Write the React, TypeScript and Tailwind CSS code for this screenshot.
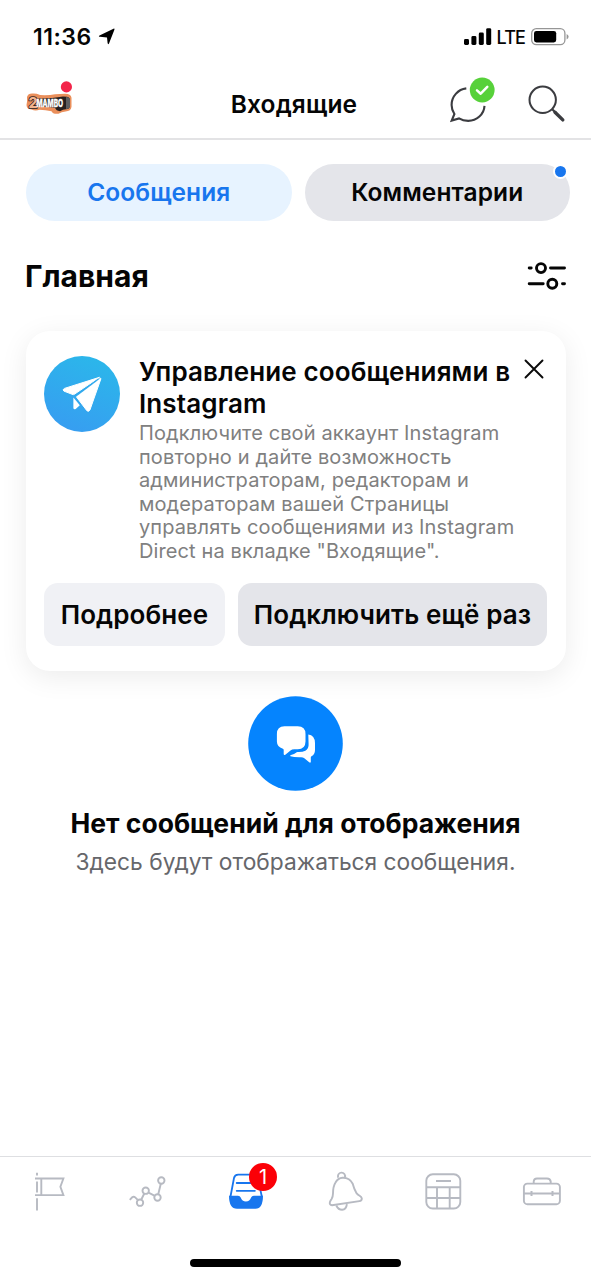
import React from 'react';

type TabItem = {
  id: string;
  label: string;
  icon: React.ReactNode;
  badge?: number;
};

const LocationArrow = () => (
  <svg width="18" height="18" viewBox="0 0 18 18">
    <path d="M16 .6Q16.800.6 16.400 1.800L11 15.500q-1 1.600-1.400-.4L9 9.400 2 8.800q-2-.4-.5-1.400Z" fill="#000" />
  </svg>
);

const Signal = () => (
  <svg width="28" height="18" viewBox="0 0 28 18">
    <rect x="0" y="11" width="5" height="6" rx="1.4" />
    <rect x="7.4" y="8" width="5" height="9" rx="1.4" />
    <rect x="14.8" y="4.5" width="5" height="12.5" rx="1.4" />
    <rect x="22.2" y="0.2" width="5" height="16.8" rx="1.4" />
  </svg>
);

const Battery = () => (
  <svg width="38" height="18" viewBox="0 0 38 18">
    <rect x="0.7" y="0.7" width="33.2" height="16" rx="4.6" fill="none" stroke="#969696" strokeWidth="1.3" />
    <rect x="3" y="2.9" width="22.2" height="11.6" rx="2.4" fill="#000" />
    <path d="M35.6 6v5.600q2-1 2-2.800t-2-2.800Z" fill="#969696" />
  </svg>
);

const PageLogo = () => (
  <svg width="50" height="42" viewBox="24 78 50 42">
    <path
      d="M27 97q1-3.400 5-3.400 4-.4 8 1.400 9 .5 15-.8l10-.4q6 0 6.500 4v9q-.5 4.500-6 4.700-4 .2-7 2.200-6 .5-7-2.500-6-1.500-12-1.500-4 1.500-8-.2-5-.5-5-4.500 1-4 .5-8Z"
      fill="#ea8f5b"
    />
    <path d="M37 98.500q13 .5 26-2l4 .3q3 .5 3 4v5q-.5 3.500-4 3.500-3 0-6 2-4-.5-5-3.500-10-1.500-18-1.500Z" fill="#26201f" />
    <path d="M66 97v12q4 .3 4-3v-6q0-3-4-3Z" fill="#5d5d5f" />
    <text x="28.500" y="107.500" fontSize="14" fontWeight="800" fill="#f2b28c" stroke="#26201f" strokeWidth="1.5" paintOrder="stroke">2</text>
    <text transform="translate(36.500 106.800) scale(.72 1.1)" fontSize="9" fontWeight="800" fill="#fff" stroke="#fff" strokeWidth="0.3">MAMBO</text>
    <circle cx="66.4" cy="86.9" r="5.6" fill="#f3254a" />
  </svg>
);

const ChatDone = () => (
  <svg width="48" height="48" viewBox="448 76 48 48" fill="none">
    <path
      d="M466.300 88.400a16.600 16.600 0 0 0-14.700 16.500c0 3.700 1.100 6.500 2.800 9.100l-2.700 6.600 7.300-2.200c2.700 1.700 5.500 2.500 9.200 2.500 8.600 0 15.800-6.500 16.300-15"
      stroke="#3b3c40"
      strokeWidth="2.1"
    />
    <circle cx="482.2" cy="90" r="12.4" fill="#57d13a" />
    <path d="m477 90.400 3.700 3.300 6.600-6.900" stroke="#fff" strokeWidth="2.5" strokeLinecap="round" strokeLinejoin="round" />
  </svg>
);

const SearchIcon = () => (
  <svg width="40" height="40" viewBox="527 84 40 40" fill="none" stroke="#3b3c40">
    <circle cx="542.7" cy="99.8" r="13.2" strokeWidth="2" />
    <path d="m552.200 109.300 4 4" strokeWidth="2.2" />
    <path d="m555 112.200 7.800 7.700" strokeWidth="3.4" strokeLinecap="round" />
  </svg>
);

const FilterIcon = () => (
  <svg width="40" height="30" viewBox="527 261 40 30" fill="none" stroke="#050505" strokeWidth="2.9" strokeLinecap="round">
    <path d="M529.200 268h2M550.500 268h14M529.200 283.800h14M562.500 283.800h2" />
    <circle cx="541" cy="268.1" r="4.5" />
    <circle cx="552.3" cy="283.8" r="4.5" />
  </svg>
);

const SendIcon = () => (
  <svg width="76" height="76" viewBox="0 0 76 76">
    <defs>
      <linearGradient id="send" x1="0.7" y1="0" x2="0.3" y2="1">
        <stop offset="0" stopColor="#2bb7ea" />
        <stop offset="1" stopColor="#379df1" />
      </linearGradient>
    </defs>
    <circle cx="38" cy="38" r="38" fill="url(#send)" />
    <path d="M55.500 21.300 20.500 32.400q-2.500 1.300-.6 2.700l9.600 3.700Z" fill="#fff" stroke="#fff" strokeWidth="1" strokeLinejoin="round" />
    <path d="M56.600 22.200 32.200 40.600l10.700 14.100q1.900 1.500 3-.7l11-31.200Z" fill="#fff" stroke="#fff" strokeWidth="1" strokeLinejoin="round" />
    <path d="M29.400 41.600v10.600q.6 1.800 2.300.7l4.100-3.700Z" fill="#fff" />
    <path d="M29.500 39.300 31.300 40.500 54.500 22.900" fill="none" stroke="#33a9ed" strokeWidth="1.2" />
  </svg>
);

const CloseIcon = () => (
  <svg width="20" height="20" viewBox="0 0 20 20" stroke="#0a0a0a" strokeWidth="1.9" strokeLinecap="round">
    <path d="m1.500 1.500 17 17M18.500 1.500l-17 17" />
  </svg>
);

const EmptyIcon = () => (
  <svg width="95" height="95" viewBox="248 696 95 95">
    <circle cx="295.5" cy="743.5" r="47.3" fill="#0584fe" />
    <path d="M308.300 734.500q6.500.8 6.700 8.500v7q0 4.500-3.500 6.300-.7.400-.7 1.200v4.500q-.5 1.200-1.600.3l-5.200-4.200q-1-.8-2.800-.8-7 .2-10.800-1-.8-.8.600-1.300 3.500-.8 5-2.300.6-.6 1.600-.6 5 .2 7.800-1.400 3.500-2 3.200-6.700Z" fill="#fff" />
    <path d="M284.500 726.300h13.200q7.800 0 7.800 7.800v7.500q0 7.700-7.800 7.700h-3.400q-2.300 0-3.800 1.200l-5.200 4.200q-1.500.8-1.600-.8v-4q0-.8-.8-1.100-6-2-6-7.200v-7.500q0-7.800 7.600-7.800Z" fill="#fff" />
  </svg>
);

const FlagIcon = () => (
  <svg width="40" height="44" viewBox="29 1170 40 44" fill="none" stroke="#b7bac2" strokeWidth="1.9">
    <path d="M37 1172.700v2.800M37 1181.500v11M37 1198.200v12.200" />
    <path d="M35 1178.500h28.400l-3 8.300 3 8.300H35M41.300 1178.500v16.600" />
  </svg>
);

const ChartIcon = () => (
  <svg width="40" height="44" viewBox="128 1170 40 44" fill="none" stroke="#b7bac2" strokeWidth="1.9">
    <path d="m129.800 1199.800 2.400-2.500q1.500-1.200 3 .1l2.500 2.500M141.300 1199.500l3-6M148.500 1192.600l6.400 3.200M158.300 1194l2.500-10.300" />
    <circle cx="140" cy="1202.7" r="3.2" />
    <circle cx="145.7" cy="1190.7" r="3.2" />
    <circle cx="157.5" cy="1197.5" r="3.2" />
    <circle cx="161.3" cy="1180.5" r="3.2" />
  </svg>
);

const InboxIcon = () => (
  <svg width="40" height="44" viewBox="226 1170 40 44" fill="none">
    <path d="M230.500 1196.500 234 1178q.8-3.400 4.200-3.400h15.400q3.400 0 4.200 3.400l4 18.500" stroke="#1876ee" strokeWidth="1.8" />
    <path d="M236.700 1183h16M236.700 1190.800h18.200" stroke="#1876ee" strokeWidth="1.8" strokeLinecap="round" />
    <path d="M229 1195.700h9q2 0 2.700 1.900 1.400 4 5.200 4t5.200-4q.7-1.900 2.700-1.900h9.200q-.1 13-7.500 13h-18.500q-8 0-8-13Z" fill="#1876ee" />
  </svg>
);

const BellIcon = () => (
  <svg width="40" height="44" viewBox="325 1170 40 44" fill="none" stroke="#b7bac2" strokeWidth="1.9" strokeLinejoin="round">
    <path d="M338.300 1177.800a3.600 3.600 0 1 1 6.600-.4" />
    <path d="M332 1205.200q-2.800-.2-2.100-3.200.6-1.500 1.700-3 1.300-2 1.400-5.500 0-7 2.500-11 2.500-4.500 7-4.700 7-.3 10.200 6 1.300 5 3.600 9 1.300 1.700 3.300 2.900 2 1.300 2.200 2.700 0 2.300-2.400 2.700Z" />
    <path d="M336.300 1205.500q2 4.300 5.800 4.300 4.200-.4 4.800-5.700" />
  </svg>
);

const CalendarIcon = () => (
  <svg width="40" height="44" viewBox="423 1170 40 44" fill="none" stroke="#b7bac2" strokeWidth="1.9">
    <rect x="426.3" y="1174.3" width="34" height="34.2" rx="6.5" />
    <path d="M436 1181h15M426.300 1187.300h34M426.300 1198h34M437 1187.300v21M449.700 1187.300v21" />
  </svg>
);

const ToolboxIcon = () => (
  <svg width="40" height="44" viewBox="522 1170 40 44" fill="none" stroke="#b7bac2" strokeWidth="1.9">
    <rect x="523.9" y="1183.6" width="36" height="20.6" rx="3.5" />
    <path d="M533.700 1183.300v-1.800q.2-3 3.300-3h10q3.300 0 3.700 3v1.800M524 1193.500h36" />
    <path d="M531.500 1191v5M552.500 1191v5" strokeWidth="2" />
  </svg>
);

const tabs: TabItem[] = [
  { id: 'page', label: 'Страница', icon: <FlagIcon /> },
  { id: 'stats', label: 'Статистика', icon: <ChartIcon /> },
  { id: 'inbox', label: 'Входящие', icon: <InboxIcon />, badge: 1 },
  { id: 'alerts', label: 'Уведомления', icon: <BellIcon /> },
  { id: 'planner', label: 'Планировщик', icon: <CalendarIcon /> },
  { id: 'tools', label: 'Инструменты', icon: <ToolboxIcon /> },
];

const StatusBar = () => (
  <div className="h-[74px] shrink-0 flex items-center justify-between pl-[33px] pr-[22px]">
    <div className="flex items-center gap-1.5 text-[23px] font-semibold tracking-[0.5px]">
      <span>11:36</span>
      <LocationArrow />
    </div>
    <div className="flex items-center">
      <Signal />
      <span className="ml-[5px] mr-1.5 text-[18px] font-medium tracking-[-0.9px]">LTE</span>
      <Battery />
    </div>
  </div>
);

const Header = () => (
  <header className="h-[66px] shrink-0 border-b-2 border-[#e3e3e5] grid grid-cols-[180px_1fr_183px] items-center">
    <div className="pl-6 pb-3.5"><PageLogo /></div>
    <h1 className="text-center text-[24.5px] leading-7 font-semibold tracking-[0.15px] -mt-1">Входящие</h1>
    <div className="flex items-center justify-end gap-[31px] pr-6 -mt-1">
      <div className="mb-2"><ChatDone /></div>
      <SearchIcon />
    </div>
  </header>
);

const NoticeCard = () => (
  <section className="ml-[26px] mr-[25px] mt-[35px] h-[340px] rounded-[24px] bg-white shadow-[0_6px_28px_rgba(0,0,0,0.08)] pl-[18px] pr-[19px] pt-[25px]">
    <div className="flex h-[227px]">
      <SendIcon />
      <div className="ml-[19px] w-[378px] whitespace-nowrap">
        <h3 className="text-[26px] leading-[31.5px] font-semibold tracking-[0.13px]">
          Управление сообщениями в<br />Instagram
        </h3>
        <p className="text-[20px] leading-[23.6px] text-[#808080] mt-[3px] tracking-[0.11px]">
          Подключите свой аккаунт Instagram<br />
          повторно и дайте возможность<br />
          администраторам, редакторам и<br />
          модераторам вашей Страницы<br />
          управлять сообщениями из Instagram<br />
          Direct на вкладке "Входящие".
        </p>
      </div>
      <button className="ml-auto mt-[3px] mr-[3px] self-start" aria-label="Закрыть"><CloseIcon /></button>
    </div>
    <div className="flex gap-[13px] text-[26px] font-semibold tracking-[0.1px] whitespace-nowrap">
      <button className="w-[181px] h-[63px] rounded-[14px] bg-[#f0f1f5]">Подробнее</button>
      <button className="w-[309px] h-[63px] rounded-[14px] bg-[#e4e5ea]">Подключить ещё раз</button>
    </div>
  </section>
);

const App: React.FC = () => {
  return (
    <div className="w-full h-[1280px] flex flex-col overflow-hidden bg-white text-[#050505] font-['Inter','Liberation_Sans',sans-serif]">
      <StatusBar />
      <Header />
      <main className="flex-1">
        <div className="flex gap-[13px] pl-[26px] pr-[21px] pt-6 text-[24.5px] font-semibold tracking-[0.1px]">
          <button className="flex-1 h-[57px] rounded-full bg-[#e7f3ff] text-[#1876ee]">Сообщения</button>
          <button className="relative flex-1 h-[57px] rounded-full bg-[#e4e5ea]">
            Комментарии
            <span className="absolute right-[2px] top-0 size-[15px] rounded-full border-[2.5px] border-white bg-[#1876ee]" />
          </button>
        </div>
        <div className="flex items-center justify-between pl-[25px] pr-6 mt-[35px] h-10">
          <h2 className="text-[30px] font-bold">Главная</h2>
          <FilterIcon />
        </div>
        <NoticeCard />
        <div className="mt-[25px] flex flex-col items-center whitespace-nowrap">
          <EmptyIcon />
          <h3 className="mt-4 text-[26.5px] leading-8 font-bold">Нет сообщений для отображения</h3>
          <p className="mt-2 text-[22.75px] leading-[30px] text-[#66676b]">Здесь будут отображаться сообщения.</p>
        </div>
      </main>
      <nav className="h-[124px] shrink-0 border-t border-[#dedfe2] flex flex-col justify-between pb-[13px]">
        <div className="grid grid-cols-6 pt-[13px]">
          {tabs.map((tab) => (
            <button key={tab.id} aria-label={tab.label} className="relative flex justify-center">
              {tab.icon}
              {tab.badge && (
                <span className="absolute left-[52px] -top-[7px] size-7 rounded-full bg-[#fb0007] text-white text-[20px] leading-7 text-center">{tab.badge}</span>
              )}
            </button>
          ))}
        </div>
        <div className="w-[211px] h-2 rounded-full bg-black mx-auto" />
      </nav>
    </div>
  );
};

export default App;
